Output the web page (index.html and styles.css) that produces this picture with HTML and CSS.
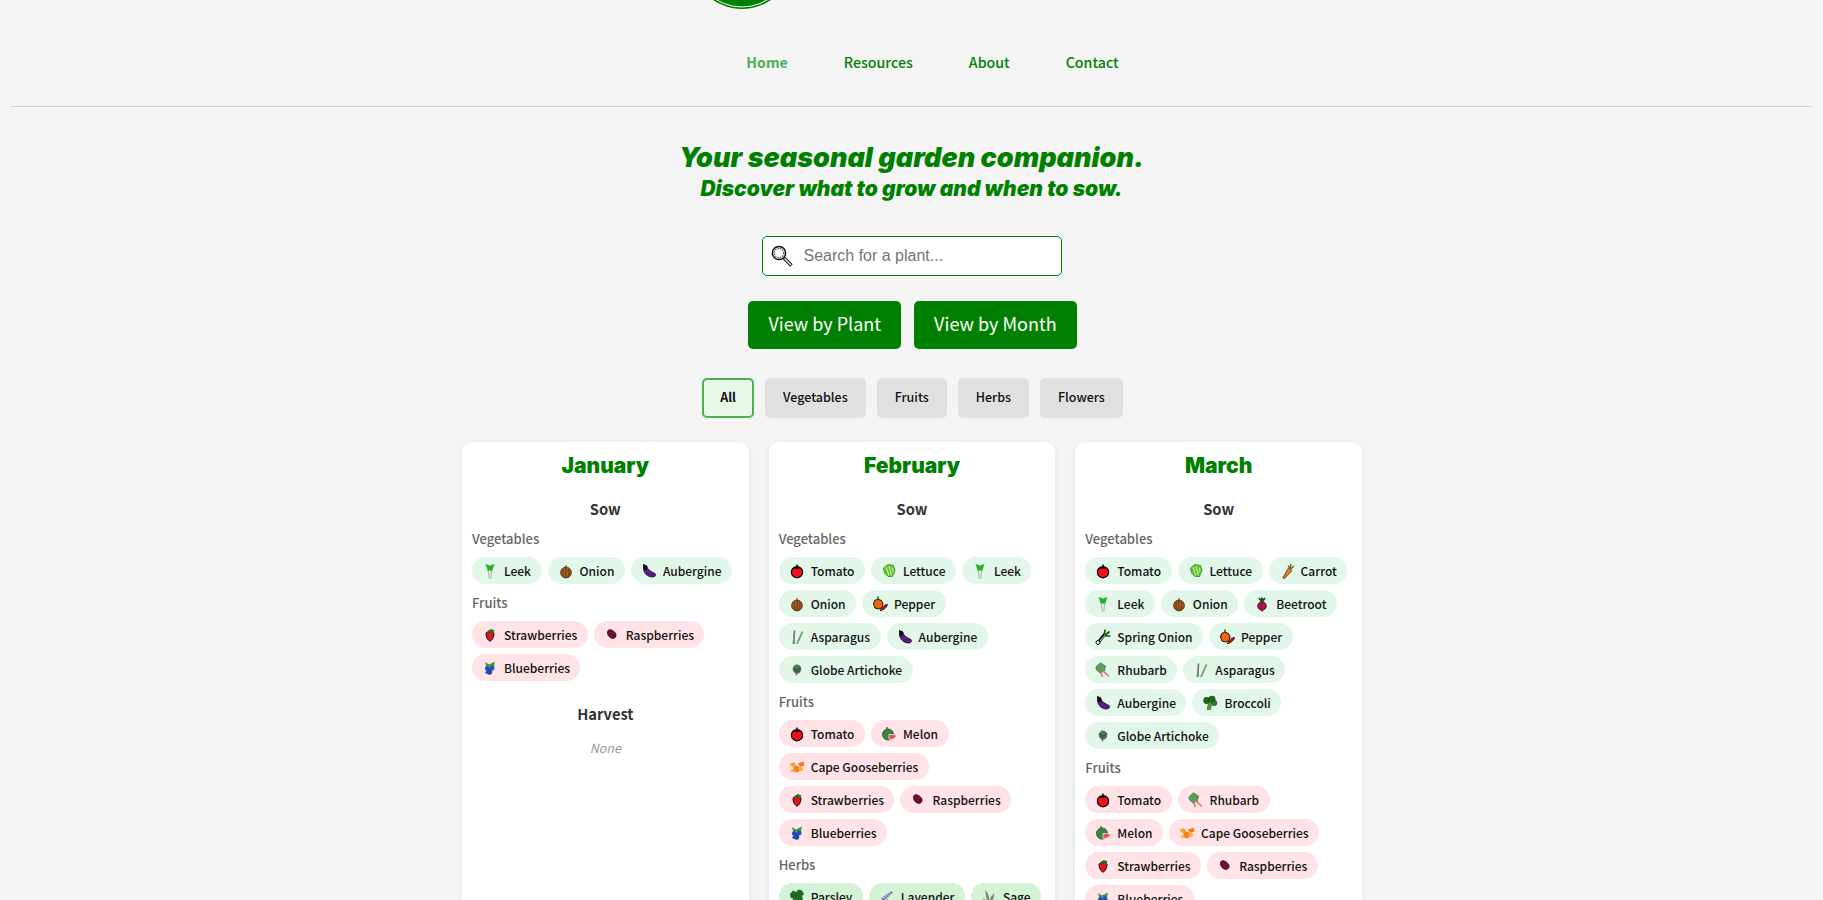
FILE: index.html
```html
<!DOCTYPE html>
<html lang="en">
<head>
<meta charset="utf-8">
<title>Seasonal Garden Companion</title>
<link rel="stylesheet" href="styles.css">
</head>
<body>
<svg class="sprites" width="0" height="0" aria-hidden="true">
  <symbol id="tomato" viewBox="0 0 16 16"><circle cx="8" cy="9.2" r="5.600" fill="#f0101a" stroke="#000" stroke-width="1.200"/><path d="M8 1.500v3.300M5 4.600 8 5.400l3-.8" stroke="#000" stroke-width="1.400" fill="none"/></symbol>
  <symbol id="lettuce" viewBox="0 0 16 16"><path d="M2.500 5 7 1.500l5.500 1 1.500 5-2.500 6H7L3.500 10z" fill="#5fc232" stroke="#2f8a1a" stroke-width=".8"/><path d="M5 4l3 8.500M8 3l2.500 9.500M11.500 4.500l.5 5" stroke="#c8ef96" stroke-width="1.100" fill="none"/></symbol>
  <symbol id="leek" viewBox="0 0 16 16"><path d="M3.500 1 8 2.500 12.500 1 10 8.500H6z" fill="#25b520"/><path d="M6.400 7.500h3.200L9 15H7z" fill="#dcefd6" stroke="#93a88f" stroke-width=".7"/></symbol>
  <symbol id="onion" viewBox="0 0 16 16"><circle cx="8" cy="9.500" r="5.400" fill="#a65f22" stroke="#5a3210" stroke-width=".9"/><path d="M8 2v3M8 5v9.500M5.500 5.800C4.300 9 5 12.500 6.500 14.500M10.500 5.800c1.200 3 .5 6.700-1 8.700" stroke="#5a3210" stroke-width=".9" fill="none"/></symbol>
  <symbol id="pepper" viewBox="0 0 16 16"><path d="M2.500 4.500 6 3.200l3.500 1.300L11 8l-1 4-3.500 1-3.500-1L1.500 8z" fill="#f0650e" stroke="#2a1200" stroke-width="1"/><path d="M6 .5v3" stroke="#1c6b16" stroke-width="1.600"/><path d="M15.500 8.500c-1 3.500-4.500 6-7.500 6 2-1.200 3.300-3.400 4.800-5.300z" fill="#d3151b" stroke="#2a0000" stroke-width=".9"/></symbol>
  <symbol id="asparagus" viewBox="0 0 16 16"><path d="M5.500 1.500 4.500 15" stroke="#8c6ca3" stroke-width="1.800"/><path d="M13.500 2.500 8 15" stroke="#6f9d62" stroke-width="1.800"/><path d="M5 8l.2 7" stroke="#6f9d62" stroke-width="1.800"/></symbol>
  <symbol id="aubergine" viewBox="0 0 16 16"><path d="M3 2l3 1c0 3 3 5 8 7.500 1.500 1.500 0 3.500-2.500 3.500-4.500 0-8-3-9-7.500z" fill="#5d1a8b" stroke="#000" stroke-width=".7"/><path d="M2 .8 6 3 5.500 7.500 2.500 6z" fill="#0b0b0b"/></symbol>
  <symbol id="artichoke" viewBox="0 0 16 16"><circle cx="8" cy="7" r="4.400" fill="#527a58"/><path d="M4.500 5.500 8 8.500l3.500-3M5 9 8 10.500 11 9" stroke="#35523e" stroke-width="1.100" fill="none"/><path d="M7.500 11v2.500" stroke="#5a7a55" stroke-width="1.300"/><path d="M5.500 10c1.500 1.600 3.500 1.600 5 0" stroke="#7d5f94" stroke-width="1.100" fill="none"/></symbol>
  <symbol id="carrot" viewBox="0 0 16 16"><path d="M9.500 5 13 7.500 5.500 15.500 3.800 14.800z" fill="#ee7a1f" stroke="#5a2800" stroke-width=".8"/><path d="M11 5.500 12 .8M11.500 6 15 3M11 5.500 9 2.500" stroke="#4a6a10" stroke-width="1.300" fill="none"/></symbol>
  <symbol id="beetroot" viewBox="0 0 16 16"><circle cx="8" cy="10" r="4.300" fill="#a3144a" stroke="#5c0428" stroke-width=".8"/><path d="M8 14v2" stroke="#a3144a"/><path d="M8 6 5 2M8 6V1.500M8 6l3-4" stroke="#14501a" stroke-width="1.800" fill="none"/></symbol>
  <symbol id="springonion" viewBox="0 0 16 16"><path d="M3.500 13 10 5" stroke="#0d0d0d" stroke-width="3.200"/><path d="M5 12 10.500 5.500" stroke="#d9ecc8" stroke-width="1"/><path d="M9.500 6 10 .5M10 6.500 14.500 2.500M10.500 7 15.500 7" stroke="#135a13" stroke-width="1.700" fill="none"/><circle cx="3" cy="13.500" r="2" fill="#f4f4f0" stroke="#000" stroke-width=".9"/></symbol>
  <symbol id="rhubarb" viewBox="0 0 16 16"><path d="M.8 5 5.500.8 10.500 4l-1 5-4.500 2-3.500-3z" fill="#5aa052" stroke="#366636" stroke-width=".6"/><path d="M7.500 8.500l6.500 6M5.500 10l2 5" stroke="#d9746c" stroke-width="1.600" fill="none"/></symbol>
  <symbol id="broccoli" viewBox="0 0 16 16"><circle cx="4.800" cy="5.500" r="3.200" fill="#1f6b1f" stroke="#0d3d0d" stroke-width=".6"/><circle cx="10" cy="4.300" r="3.200" fill="#1f6b1f" stroke="#0d3d0d" stroke-width=".6"/><circle cx="12.300" cy="8" r="2.600" fill="#2a7d2a" stroke="#0d3d0d" stroke-width=".6"/><path d="M6.500 7.500h3.500L8.500 14.500H5.200z" fill="#4f9e3a" stroke="#1f5a1a" stroke-width=".6"/></symbol>
  <symbol id="melon" viewBox="0 0 16 16"><circle cx="7" cy="8.500" r="5.600" fill="#39843e" stroke="#214f24" stroke-width=".7"/><path d="M6 3.500V1" stroke="#39632a" stroke-width="1.300"/><path d="M8 8.500l7.500.5c-.5 3-4.500 5.200-7.500 4z" fill="#e8484c" stroke="#f6f3e2" stroke-width=".8"/></symbol>
  <symbol id="capegoose" viewBox="0 0 16 16"><path d="M.5 5 5 3l2 3-3 2.500z" fill="#f2a32c"/><path d="M9 4.500 14.500 2.500 15.500 6.500 11 8z" fill="#f57f17"/><circle cx="7.500" cy="10" r="3.300" fill="#f57f17"/><circle cx="11.800" cy="10" r="2.200" fill="#f8b23e"/><path d="M1.500 11 5 9.500 6 12.500 2.500 13z" fill="#f8b23e"/></symbol>
  <symbol id="strawberry" viewBox="0 0 16 16"><path d="M4 6.500c0-1.200 2-1.800 4-1.800s4 .6 4 1.800c0 3.500-2.300 7.500-4 7.500s-4-4-4-7.500z" fill="#e4141f" stroke="#000" stroke-width="1"/><path d="M6 3.500 9 2l3.500 1.500L11 6 8 5 5 6z" fill="#1c7a1c"/></symbol>
  <symbol id="raspberry" viewBox="0 0 16 16"><path d="M3.500 4.500C4 2.500 6.500 2 8.500 3.500c2.500 1.500 4 3.500 3.500 5.500-.5 2.500-3.500 3-5.500 1.700C4.500 9.500 3 7 3.500 4.500z" fill="#6b0a2e" stroke="#38041a" stroke-width=".8"/><path d="M5.500 5l1.500 1.500M8 5.500l1.500 1.500M7 8.500l1.500 1" stroke="#93224f" stroke-width="1"/></symbol>
  <symbol id="blueberry" viewBox="0 0 16 16"><path d="M3 2 7 4.500 13 1.500 12 6.500 4 6.500z" fill="#3e9b3a"/><circle cx="5.500" cy="8.500" r="2.500" fill="#1f4fb3"/><circle cx="10" cy="8" r="2.500" fill="#2453b8"/><circle cx="7.500" cy="12" r="2.700" fill="#1b46a5"/><circle cx="5" cy="12.300" r="1.600" fill="#2453b8"/></symbol>
  <symbol id="parsley" viewBox="0 0 16 16"><path d="M1 5 4 1.500l3 1.500 2.500-2.500 3.500 1 2 3.500-2 2 1 3.500-3.500 1-2 2.500-3.500-1-1-3.500-2.500-1z" fill="#1e6a23"/><path d="M6 8 3 15.500" stroke="#1e6a23" stroke-width="1.500"/></symbol>
  <symbol id="lavender" viewBox="0 0 16 16"><path d="M2 13 13.500 2.500" stroke="#7a68ac" stroke-width="2.200" stroke-dasharray="2 .6"/><path d="M2.500 10 10 4.500" stroke="#9a8cc4" stroke-width="1.800" stroke-dasharray="2 .6"/><path d="M1.500 15.500 9 10.500" stroke="#6f9478" stroke-width="1.500"/></symbol>
  <symbol id="sage" viewBox="0 0 16 16"><path d="M8 15.500C5.500 11 4.500 6 4.500 1 7.500 5 9 9 8 15.500zM8 15.500c0-4 1.500-8 5-11 .5 4-1.500 8-5 11zM8 15.500c-2.500-1.500-5-3-6-6 3 1 5 3 6 6zM8 15.500c1.500-2.500 3.500-3.500 6.500-4-1 2.500-4 4-6.500 4z" fill="#76896f"/></symbol>
  <symbol id="lens" viewBox="0 0 22 22"><circle cx="8" cy="8" r="6.600" fill="#fff" stroke="#111" stroke-width="1.500"/><circle cx="8" cy="8" r="4.700" fill="none" stroke="#555" stroke-width="1.200" stroke-dasharray="1.500 1"/><path d="m13 13 7.500 7.500" stroke="#111" stroke-width="3.400"/><path d="m13.500 13.500 6.500 6.500" stroke="#eee" stroke-width="1.400"/></symbol>
</svg>

<header class="site-header">
  <div class="brand">
    <svg class="logo" viewBox="0 0 64 10" width="64" height="10" aria-hidden="true">
      <circle cx="32" cy="-42" r="51" fill="#008000"/>
      <circle cx="32" cy="-42" r="49" fill="none" stroke="#fff" stroke-width="1"/>
    </svg>
  </div>
  <nav>
    <ul class="nav-list">
      <li><a class="nav-link is-active" href="#">Home</a></li>
      <li><a class="nav-link" href="#">Resources</a></li>
      <li><a class="nav-link" href="#">About</a></li>
      <li><a class="nav-link" href="#">Contact</a></li>
    </ul>
  </nav>
</header>

<main>
  <div class="hero">
    <h1 class="tagline">Your seasonal garden companion.</h1>
    <h2 class="subline">Discover what to grow and when to sow.</h2>
  </div>

  <div class="search">
    <svg class="search-icon"><use href="#lens"/></svg>
    <input class="search-input" type="text" placeholder="Search for a plant...">
  </div>

  <div class="views">
    <button class="view-btn">View by Plant</button>
    <button class="view-btn">View by Month</button>
  </div>

  <div class="filters">
    <button class="filter is-on">All</button>
    <button class="filter">Vegetables</button>
    <button class="filter">Fruits</button>
    <button class="filter">Herbs</button>
    <button class="filter">Flowers</button>
  </div>

  <div class="months">
    <section class="card">
      <h3 class="month">January</h3>
      <h4 class="phase">Sow</h4>
      <h5 class="kind">Vegetables</h5>
      <ul class="pills">
        <li class="pill veg"><svg class="ico"><use href="#leek"/></svg>Leek</li>
        <li class="pill veg"><svg class="ico"><use href="#onion"/></svg>Onion</li>
        <li class="pill veg"><svg class="ico"><use href="#aubergine"/></svg>Aubergine</li>
      </ul>
      <h5 class="kind">Fruits</h5>
      <ul class="pills">
        <li class="pill fruit"><svg class="ico"><use href="#strawberry"/></svg>Strawberries</li>
        <li class="pill fruit"><svg class="ico"><use href="#raspberry"/></svg>Raspberries</li>
        <li class="pill fruit"><svg class="ico"><use href="#blueberry"/></svg>Blueberries</li>
      </ul>
      <h4 class="phase phase-next">Harvest</h4>
      <p class="none">None</p>
    </section>

    <section class="card">
      <h3 class="month">February</h3>
      <h4 class="phase">Sow</h4>
      <h5 class="kind">Vegetables</h5>
      <ul class="pills">
        <li class="pill veg"><svg class="ico"><use href="#tomato"/></svg>Tomato</li>
        <li class="pill veg"><svg class="ico"><use href="#lettuce"/></svg>Lettuce</li>
        <li class="pill veg"><svg class="ico"><use href="#leek"/></svg>Leek</li>
        <li class="pill veg"><svg class="ico"><use href="#onion"/></svg>Onion</li>
        <li class="pill veg"><svg class="ico"><use href="#pepper"/></svg>Pepper</li>
        <li class="pill veg"><svg class="ico"><use href="#asparagus"/></svg>Asparagus</li>
        <li class="pill veg"><svg class="ico"><use href="#aubergine"/></svg>Aubergine</li>
        <li class="pill veg"><svg class="ico"><use href="#artichoke"/></svg>Globe Artichoke</li>
      </ul>
      <h5 class="kind">Fruits</h5>
      <ul class="pills">
        <li class="pill fruit"><svg class="ico"><use href="#tomato"/></svg>Tomato</li>
        <li class="pill fruit"><svg class="ico"><use href="#melon"/></svg>Melon</li>
        <li class="pill fruit"><svg class="ico"><use href="#capegoose"/></svg>Cape Gooseberries</li>
        <li class="pill fruit"><svg class="ico"><use href="#strawberry"/></svg>Strawberries</li>
        <li class="pill fruit"><svg class="ico"><use href="#raspberry"/></svg>Raspberries</li>
        <li class="pill fruit"><svg class="ico"><use href="#blueberry"/></svg>Blueberries</li>
      </ul>
      <h5 class="kind">Herbs</h5>
      <ul class="pills">
        <li class="pill herb"><svg class="ico"><use href="#parsley"/></svg>Parsley</li>
        <li class="pill herb"><svg class="ico"><use href="#lavender"/></svg>Lavender</li>
        <li class="pill herb"><svg class="ico"><use href="#sage"/></svg>Sage</li>
      </ul>
    </section>

    <section class="card">
      <h3 class="month">March</h3>
      <h4 class="phase">Sow</h4>
      <h5 class="kind">Vegetables</h5>
      <ul class="pills">
        <li class="pill veg"><svg class="ico"><use href="#tomato"/></svg>Tomato</li>
        <li class="pill veg"><svg class="ico"><use href="#lettuce"/></svg>Lettuce</li>
        <li class="pill veg"><svg class="ico"><use href="#carrot"/></svg>Carrot</li>
        <li class="pill veg"><svg class="ico"><use href="#leek"/></svg>Leek</li>
        <li class="pill veg"><svg class="ico"><use href="#onion"/></svg>Onion</li>
        <li class="pill veg"><svg class="ico"><use href="#beetroot"/></svg>Beetroot</li>
        <li class="pill veg"><svg class="ico"><use href="#springonion"/></svg>Spring Onion</li>
        <li class="pill veg"><svg class="ico"><use href="#pepper"/></svg>Pepper</li>
        <li class="pill veg"><svg class="ico"><use href="#rhubarb"/></svg>Rhubarb</li>
        <li class="pill veg"><svg class="ico"><use href="#asparagus"/></svg>Asparagus</li>
        <li class="pill veg"><svg class="ico"><use href="#aubergine"/></svg>Aubergine</li>
        <li class="pill veg"><svg class="ico"><use href="#broccoli"/></svg>Broccoli</li>
        <li class="pill veg"><svg class="ico"><use href="#artichoke"/></svg>Globe Artichoke</li>
      </ul>
      <h5 class="kind">Fruits</h5>
      <ul class="pills">
        <li class="pill fruit"><svg class="ico"><use href="#tomato"/></svg>Tomato</li>
        <li class="pill fruit"><svg class="ico"><use href="#rhubarb"/></svg>Rhubarb</li>
        <li class="pill fruit"><svg class="ico"><use href="#melon"/></svg>Melon</li>
        <li class="pill fruit"><svg class="ico"><use href="#capegoose"/></svg>Cape Gooseberries</li>
        <li class="pill fruit"><svg class="ico"><use href="#strawberry"/></svg>Strawberries</li>
        <li class="pill fruit"><svg class="ico"><use href="#raspberry"/></svg>Raspberries</li>
        <li class="pill fruit"><svg class="ico"><use href="#blueberry"/></svg>Blueberries</li>
      </ul>
    </section>
  </div>
</main>
</body>
</html>
```
FILE: styles.css
```css
* { box-sizing: border-box; }

html, body {
  height: 900px;
  overflow: hidden;
}

body {
  margin: 0;
  padding: 0 11px;
  background: #f4f4f4;
  color: #222;
  font-family: "Noto Sans CJK JP", "Noto Sans", sans-serif;
}

.sprites { display: block; height: 0; }

.site-header {
  border-bottom: 1px solid #bcdcbe;
}

.brand {
  height: 10px;
  overflow: hidden;
  display: flex;
  justify-content: center;
  padding-right: 339px;
}

.logo { display: block; flex: none; }

.nav-list {
  list-style: none;
  margin: 0;
  padding: 36px 0 0 42px;
  height: 96px;
  display: flex;
  justify-content: center;
  gap: 56px;
}

.nav-link {
  display: block;
  font-size: 14.200px;
  line-height: 32px;
  font-weight: 500;
  color: #008000;
  text-decoration: none;
}

.nav-link.is-active { color: #4caf50; font-weight: 700; }

.hero {
  text-align: center;
  color: #008000;
  padding-top: 35px;
}

.tagline, .subline {
  margin: 0;
  font-family: "Inter", sans-serif;
  font-weight: 900;
  font-style: italic;
}

.tagline { font-size: 27px; line-height: 32px; }
.subline { font-size: 21px; line-height: 29px; }

.search {
  position: relative;
  width: 300px;
  height: 40px;
  margin: 33px auto 0;
}

.search-icon {
  position: absolute;
  left: 9px;
  top: 9px;
  width: 22px;
  height: 22px;
}

.search-input {
  display: block;
  width: 100%;
  height: 100%;
  border: 1px solid #008000;
  border-radius: 5px;
  background: #fff;
  padding: 0 10px 0 41px;
  font-family: "Liberation Sans", sans-serif;
  font-size: 16px;
}

.search-input::placeholder { color: #757575; }

.views {
  display: flex;
  justify-content: center;
  gap: 13px;
  margin-top: 25px;
  padding-left: 2px;
}

.view-btn {
  height: 48px;
  padding: 0 20px 4px;
  border: 0;
  border-radius: 5px;
  background: #008000;
  color: #fff;
  font-family: inherit;
  font-size: 18px;
  font-weight: 400;
}

.filters {
  display: flex;
  justify-content: center;
  gap: 11px;
  margin-top: 29px;
  padding-left: 2px;
}

.filter {
  height: 40px;
  padding: 0 16px 4px;
  border: 2px solid #e0e0e0;
  border-radius: 5px;
  background: #e0e0e0;
  color: #111;
  font-family: inherit;
  font-size: 12.500px;
  font-weight: 500;
}

.filter.is-on {
  border-color: #4caf50;
  background: #e8f5e9;
  font-weight: 700;
}

.months {
  display: grid;
  grid-template-columns: repeat(3, 1fr);
  gap: 20px;
  width: 901px;
  padding-left: 1px;
  margin: 24px auto 0;
}

.card {
  background: #fff;
  border-radius: 10px;
  box-shadow: 0 2px 6px rgba(0, 0, 0, 0.08);
  padding: 10px;
  min-height: 500px;
}

.month {
  margin: 0;
  padding-top: 1px;
  text-align: center;
  color: #008000;
  font-family: "Inter", sans-serif;
  font-weight: 900;
  font-size: 21px;
  line-height: 25px;
}

.phase {
  margin: 20px 0 0;
  text-align: center;
  color: #333;
  font-size: 14.700px;
  line-height: 22px;
  font-weight: 700;
}

.phase-next { margin-top: 22px; }

.kind {
  margin: 9px 0 0;
  color: #666;
  font-size: 13px;
  line-height: 20px;
  font-weight: 500;
}

.pills {
  list-style: none;
  margin: 8px 0 0;
  padding: 0;
  display: flex;
  flex-wrap: wrap;
  gap: 6px;
}

.pill {
  display: flex;
  align-items: center;
  height: 27px;
  padding: 0 10.500px 0 10px;
  border-radius: 14px;
  color: #111;
  font-size: 12px;
  font-weight: 500;
}

.veg { background: #e2f6ea; }
.fruit { background: #ffe3e6; }
.herb { background: #d3f2d6; }

.ico {
  flex: none;
  width: 16px;
  height: 16px;
  margin-right: 6px;
}

.none {
  margin: 13px 0 0;
  text-align: center;
  color: #999;
  font-size: 12.500px;
  line-height: 20px;
  font-style: italic;
}
```
